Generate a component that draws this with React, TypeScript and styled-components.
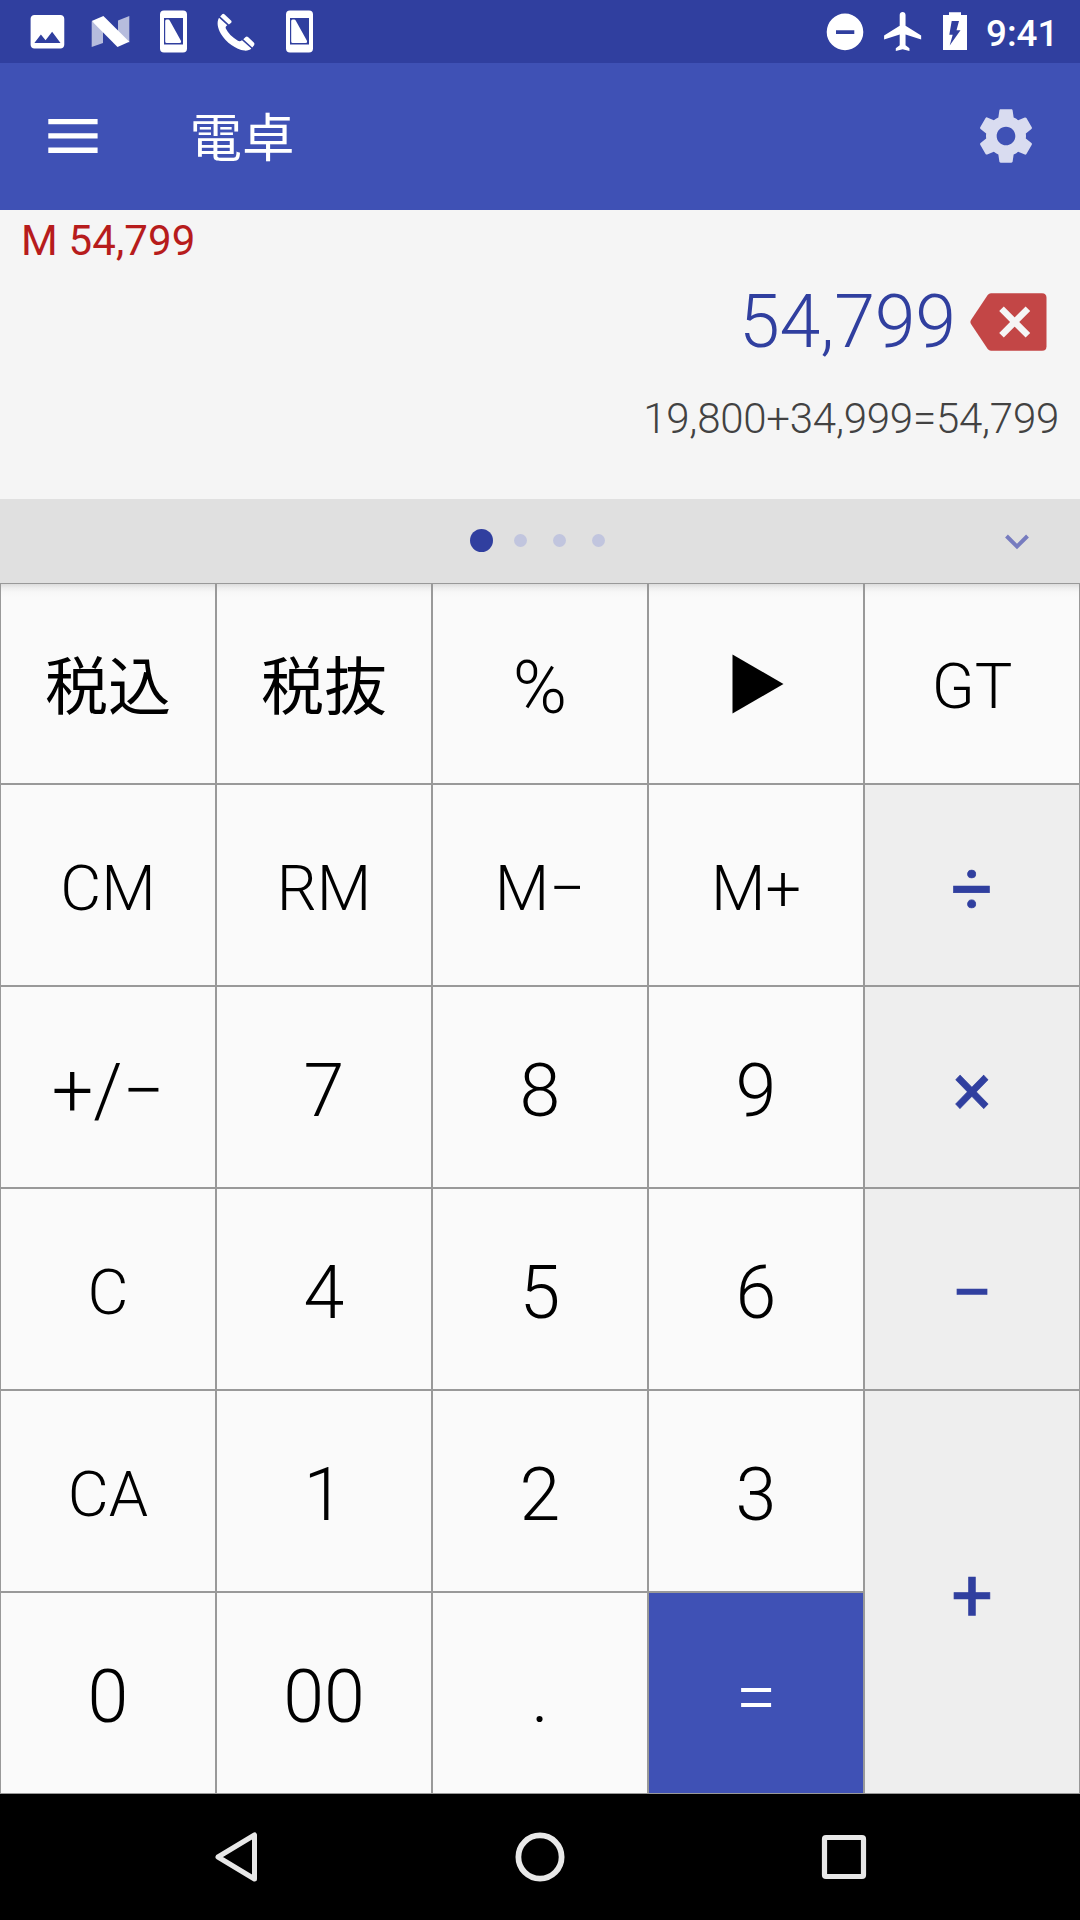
import React from "react";
import styled, { createGlobalStyle } from "styled-components";

const GlobalStyle = createGlobalStyle`
  * { box-sizing: border-box; }
  body { margin: 0; background: #000; }
  svg { display: block; flex: none; }
`;

const Screen = styled.div`
  width: 1080px;
  height: 1920px;
  display: flex;
  flex-direction: column;
  overflow: hidden;
  font-family: Roboto, "Noto Sans CJK JP", sans-serif;
`;

const StatusBar = styled.header`
  height: 63px;
  flex: none;
  display: flex;
  justify-content: space-between;
  background: #303f9f;
  color: #fff;
`;

const Clock = styled.span`
  width: 72px;
  margin-left: 18px;
  margin-right: 22px;
  font-size: 36.75px;
  font-weight: 500;
  line-height: 67px;
  white-space: nowrap;
`;

const StatusGroup = styled.div`
  display: flex;
`;

const Toolbar = styled.div`
  height: 147px;
  flex: none;
  display: flex;
  align-items: center;
  padding: 0 42px 1px 48px;
  background: #3f51b5;
`;

const Title = styled.h1`
  flex: 1;
  margin: 0 0 0 91.5px;
  padding-top: 6px;
  color: #fff;
  font-size: 52.5px;
  font-weight: 400;
  line-height: 72px;
`;

const Display = styled.section`
  height: 289px;
  flex: none;
  display: flex;
  flex-direction: column;
  background: #f5f5f5;
`;

const Memory = styled.div`
  height: 62px;
  padding-left: 21px;
  color: #b71c1c;
  font-size: 42px;
  letter-spacing: 0.15px;
  line-height: 62px;
`;

const ResultRow = styled.div`
  height: 100px;
  display: flex;
  justify-content: flex-end;
  align-items: center;
  gap: 13px;
  padding-right: 33px;
`;

const Result = styled.span`
  color: #303f9f;
  font-size: 73.5px;
  font-weight: 300;
  letter-spacing: -0.15px;
  line-height: 100px;
`;

const Expression = styled.div`
  padding: 22px 21px 0 0;
  text-align: right;
  color: #424242;
  font-size: 42px;
  font-weight: 300;
  letter-spacing: -0.24px;
  line-height: 50px;
`;

const Pager = styled.div`
  height: 84px;
  flex: none;
  display: grid;
  grid-template-columns: 1fr auto 1fr;
  align-items: center;
  background: #e0e0e0;
`;

const Dots = styled.div`
  grid-column: 2;
  display: flex;
  align-items: center;
  gap: 26px;
  margin-right: 5px;
  padding-bottom: 1px;
`;

const Dot = styled.i<{ $active?: boolean }>`
  width: ${(p) => (p.$active ? 23 : 13)}px;
  height: ${(p) => (p.$active ? 23 : 13)}px;
  margin-right: ${(p) => (p.$active ? -5 : 0)}px;
  border-radius: 50%;
  background: ${(p) => (p.$active ? "#303f9f" : "#c1c5de")};
`;

const Collapse = styled.div`
  justify-self: end;
  padding: 1px 50px 0 0;
`;

const Keypad = styled.main`
  flex: none;
  display: grid;
  grid-template-columns: repeat(5, 216px);
  grid-template-rows: 201px repeat(5, 202px);
`;

type Tone = "plain" | "operator" | "equals";

const toneBackground: Record<Tone, string> = {
  plain: "#fafafa",
  operator: "#eeeeee",
  equals: "#3f51b5",
};
const toneColor: Record<Tone, string> = {
  plain: "#000",
  operator: "#303f9f",
  equals: "#fff",
};

const Key = styled.button<{
  $tone: Tone;
  $size: number;
  $weight: number;
  $tall?: boolean;
  $shaded?: boolean;
  $drop: number;
}>`
  display: flex;
  align-items: center;
  justify-content: center;
  margin: 0;
  padding: ${(p) => p.$drop}px 0 0;
  border: 1px solid #999;
  grid-row: ${(p) => (p.$tall ? "span 2" : "auto")};
  background: ${(p) =>
    p.$shaded
      ? "linear-gradient(#dcdcdc, #eeeeee 4px, #f7f7f7 8px, #fafafa 13px)"
      : toneBackground[p.$tone]};
  color: ${(p) => toneColor[p.$tone]};
  font-family: inherit;
  font-size: ${(p) => p.$size}px;
  font-weight: ${(p) => p.$weight};
  -webkit-text-stroke: ${(p) => (p.$tone === "operator" ? "0.7px #303f9f" : "0")};
  line-height: 1.2;
`;

const PlayMark = styled.svg`
  margin-left: 3px;
`;

const NavBar = styled.nav`
  height: 126px;
  flex: none;
  display: flex;
  justify-content: center;
  align-items: center;
  gap: 244px;
  background: #000;
`;

const StatusIcon = ({ width, children }: { width: number; children: React.ReactNode }) => (
  <svg width={width} height="63" viewBox={`0 0 ${width} 63`} fill="#fff">
    {children}
  </svg>
);

const ScreenPhone = () => (
  <StatusIcon width={63}>
    <path
      fillRule="evenodd"
      d="M22 10.500h19a4 4 0 0 1 4 4v34a4 4 0 0 1-4 4h-19a4 4 0 0 1-4-4v-34a4 4 0 0 1 4-4zM22 18v26.500h19V18z"
    />
    <path d="M23.200 21q0-1.500 1.400-1.500h1.600q1 0 1.500 1L38.800 40.500q1 2.500-1.300 2.500H24.700q-1.500 0-1.500-1.500z" />
  </StatusIcon>
);

const gearPath =
  "M19.430 12.980c.04-.32.07-.64.07-.98s-.03-.66-.07-.98l2.110-1.650c.19-.15.24-.42.12-.64l-2-3.460c-.12-.22-.39-.3-.61-.22l-2.490 1c-.52-.4-1.080-.73-1.690-.98l-.38-2.650C14.460 2.180 14.250 2 14 2h-4c-.25 0-.46.18-.49.42l-.38 2.650c-.61.25-1.170.59-1.690.98l-2.490-1c-.23-.09-.49 0-.61.22l-2 3.460c-.13.22-.07.49.12.64l2.110 1.650c-.04.32-.07.65-.07.98s.03.66.07.98l-2.110 1.650c-.19.15-.24.42-.12.64l2 3.460c.12.22.39.3.61.22l2.490-1c.52.4 1.080.73 1.690.98l.38 2.650c.03.24.24.42.49.42h4c.25 0 .46-.18.49-.42l.38-2.650c.61-.25 1.170-.59 1.690-.98l2.490 1c.23.09.49 0 .61-.22l2-3.460c.12-.22.07-.49-.12-.64l-2.110-1.650zM12 15.500c-1.930 0-3.500-1.570-3.500-3.500s1.570-3.500 3.500-3.500 3.500 1.570 3.500 3.500-1.570 3.500-3.500 3.500z";

type KeyDef = {
  label: string;
  kind: "word" | "kanji" | "digit" | "play" | "op" | "equals";
  tall?: boolean;
};

const keys: KeyDef[] = [
  { label: "税込", kind: "kanji" },
  { label: "税抜", kind: "kanji" },
  { label: "%", kind: "digit" },
  { label: "▶", kind: "play" },
  { label: "GT", kind: "word" },
  { label: "CM", kind: "word" },
  { label: "RM", kind: "word" },
  { label: "M−", kind: "word" },
  { label: "M+", kind: "word" },
  { label: "÷", kind: "op" },
  { label: "+/−", kind: "digit" },
  { label: "7", kind: "digit" },
  { label: "8", kind: "digit" },
  { label: "9", kind: "digit" },
  { label: "×", kind: "op" },
  { label: "C", kind: "word" },
  { label: "4", kind: "digit" },
  { label: "5", kind: "digit" },
  { label: "6", kind: "digit" },
  { label: "−", kind: "op" },
  { label: "CA", kind: "word" },
  { label: "1", kind: "digit" },
  { label: "2", kind: "digit" },
  { label: "3", kind: "digit" },
  { label: "+", kind: "op", tall: true },
  { label: "0", kind: "digit" },
  { label: "00", kind: "digit" },
  { label: ".", kind: "digit" },
  { label: "=", kind: "equals" },
];

const style = {
  word: { size: 63, weight: 300, drop: 7 },
  kanji: { size: 63, weight: 400, drop: 8 },
  digit: { size: 73.5, weight: 300, drop: 9 },
  play: { size: 63, weight: 400, drop: 1 },
  op: { size: 73.5, weight: 400, drop: 9 },
  equals: { size: 73.5, weight: 300, drop: 8 },
};

export default function App() {
  return (
    <Screen>
      <GlobalStyle />
      <StatusBar>
        <StatusGroup>
          <StatusIcon width={79}>
            <g transform="translate(25 9.300) scale(1.870)">
              <path d="M21 19V5c0-1.100-.9-2-2-2H5c-1.100 0-2 .9-2 2v14c0 1.100.9 2 2 2h14c1.100 0 2-.9 2-2zM8.500 13.500l2.500 3.010L14.500 12l4.500 6H5l3.500-4.500z" />
            </g>
          </StatusIcon>
          <StatusIcon width={63}>
            <g transform="translate(-79 0)">
              <path d="M91.700 21.500L103 27v16l-11.300 4z" fillOpacity=".65" />
              <path d="M129.300 16v26.500L118 37V20.500z" fillOpacity=".65" />
              <path d="M91.700 20.900L103.400 16L129.300 41.800L117.500 47z" />
            </g>
          </StatusIcon>
          <ScreenPhone />
          <StatusIcon width={63}>
            <g transform="translate(-205 0)">
              <path d="M219 17.800C216.500 22 217.500 28 221 34C226 42.500 236 49.500 244.500 50.600C247.500 50.800 250 49.800 251.300 48.400L242 40.200C240.500 41.300 239 41.500 237.500 40.500C232 37 228 33 225.800 28.500C225.300 27 225.800 26.200 227.300 25.200z" />
              <path d="M220.200 16.500l2-2.200q1-1 2.200 0l6.600 6.200q1.100 1.100.2 2.200l-2.300 1.700z" />
              <path d="M243.300 39.200l2.300-2.200q1.200-1.100 2.400 0l5.800 5.600q1.300 1.200.3 2.600l-1.800 2.300z" />
            </g>
          </StatusIcon>
          <ScreenPhone />
        </StatusGroup>
        <StatusGroup>
          <StatusIcon width={54}>
            <g transform="translate(-822 0)">
              <path fillRule="evenodd" d="M845 13.600a18.300 18.300 0 1 1 0 36.600a18.300 18.300 0 1 1 0-36.600zM836 30.300v3.600h18.300v-3.600z" />
            </g>
          </StatusIcon>
          <StatusIcon width={54}>
            <g transform="translate(4.200 8.200) scale(1.950)">
              <path d="M21 16v-2l-8-5V3.500c0-.83-.67-1.500-1.500-1.500S10 2.670 10 3.500V9l-8 5v2l8-2.500V19l-2 1.500V22l3.500-1 3.500 1v-1.500L13 19v-5.500l8 2.500z" />
            </g>
          </StatusIcon>
          <StatusIcon width={38}>
            <g transform="translate(-930 0)">
              <path fillRule="evenodd" d="M949 12.300h12v2.700h6v35h-24V15h6zM951.700 21l-2.400 13.700h3.400L949.700 45.500l10.800-15.300h-4L959 21z" />
            </g>
          </StatusIcon>
          <Clock>9:41</Clock>
        </StatusGroup>
      </StatusBar>

      <Toolbar>
        <svg width="50" height="34" viewBox="0 0 50 34" fill="#fff">
          <path d="M.3 0h49.300v5.300H.3zM.3 14.300h49.300v5.300H.3zM.3 28.600h49.300v5.300H.3z" />
        </svg>
        <Title>電卓</Title>
        <svg width="64" height="64" viewBox="0 0 24 24" fill="#d9dcf0">
          <path d={gearPath} />
        </svg>
      </Toolbar>

      <Display>
        <Memory>M 54,799</Memory>
        <ResultRow>
          <Result>54,799</Result>
          <svg width="78" height="58" viewBox="0 0 78 58">
            <path d="M22 .3H73q4.500 0 4.500 4.500v48.400q0 4.500-4.500 4.500H22q-2-.2-3.300-1.800L2 31q-1.200-2 0-4L18.700 2.100Q20 .5 22 .3z" fill="#c34646" />
            <path d="M32.500 15.800L58.900 42.200M58.900 15.800L32.500 42.200" stroke="#f5f5f5" strokeWidth="6.500" />
          </svg>
        </ResultRow>
        <Expression>19,800+34,999=54,799</Expression>
      </Display>

      <Pager>
        <Dots>
          <Dot $active />
          <Dot />
          <Dot />
          <Dot />
        </Dots>
        <Collapse>
          <svg width="26" height="18" viewBox="0 0 26 18">
            <path d="M2.500 3L13 13.500L23.500 3" fill="none" stroke="#777cbf" strokeWidth="4" />
          </svg>
        </Collapse>
      </Pager>

      <Keypad>
        {keys.map((k, i) => {
          const s = style[k.kind];
          return (
            <Key
              key={k.label}
              $tone={k.kind === "op" ? "operator" : k.kind === "equals" ? "equals" : "plain"}
              $size={s.size}
              $weight={s.weight}
              $drop={s.drop}
              $tall={k.tall}
              $shaded={i < 5}
              aria-label={k.label}
            >
              {k.kind === "play" ? (
                <PlayMark width="52" height="60" viewBox="0 0 52 60">
                  <path d="M.5 .5L51.500 30L.5 59.500z" />
                </PlayMark>
              ) : (
                k.label
              )}
            </Key>
          );
        })}
      </Keypad>

      <NavBar>
        <svg width="60" height="60" viewBox="0 0 60 60" fill="none" stroke="#e8e8e8" strokeWidth="5" strokeLinejoin="round">
          <path d="M48.500 8V52L12 30z" />
        </svg>
        <svg width="60" height="60" viewBox="0 0 60 60" fill="none" stroke="#e8e8e8" strokeWidth="5.800">
          <circle cx="30" cy="30" r="21.600" />
        </svg>
        <svg width="60" height="60" viewBox="0 0 60 60" fill="none" stroke="#e8e8e8" strokeWidth="5.200">
          <rect x="10.500" y="10.500" width="39" height="39" rx="1.500" />
        </svg>
      </NavBar>
    </Screen>
  );
}
